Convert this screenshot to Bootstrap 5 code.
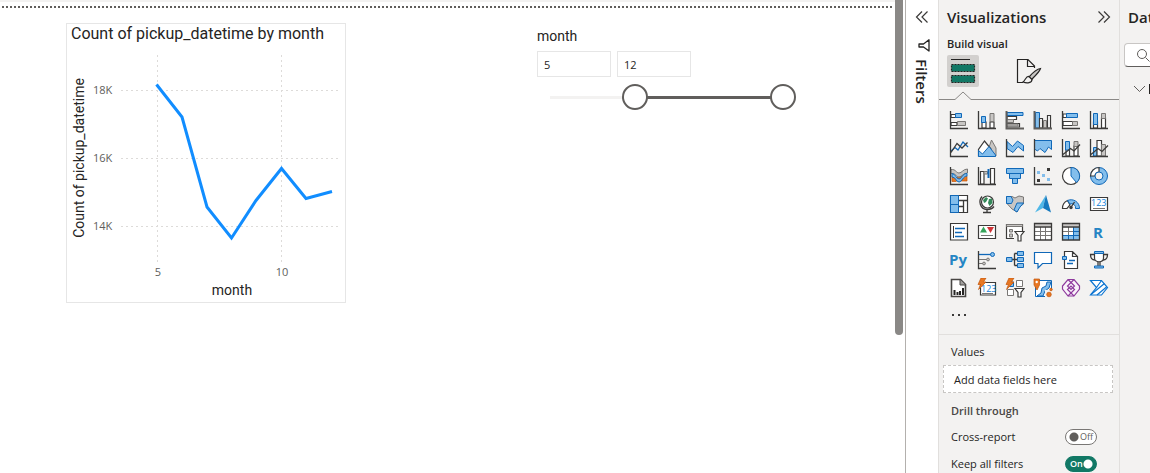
<!DOCTYPE html>
<html lang="en">
<head>
<meta charset="utf-8">
<meta name="viewport" content="width=device-width, initial-scale=1">
<title>Report editor</title>
<link rel="stylesheet" href="https://cdn.jsdelivr.net/npm/bootstrap@5.3.0/dist/css/bootstrap.min.css">
<style>
  body { font: 12px/16px "Open Sans", "Noto Sans", sans-serif; color: #252423; background: #fff; }
  button { border: 0; background: none; padding: 0; color: inherit; }
  svg { display: block; flex: none; }
  .report { border-top: 2px solid #f3f2f1; }
  .page-edge { height: 2px; margin: 4px 3px 0 2px; background: repeating-linear-gradient(90deg, #605e5c 0 2px, #fff 2px 4px); }
  .visuals { margin: 15px 0 0 66px; gap: 191px; }
  .din { font-family: Roboto, sans-serif; font-weight: 400; }
  .chart-box { width: 280px; border: 1px solid #e6e6e6; }
  .chart-title { font-size: 16px; line-height: 20px; padding: 0 0 1px 4px; white-space: nowrap; margin: 0; }
  .axis { font: 11px "Open Sans", sans-serif; fill: #605e5c; }
  .axis-title { font: 14px Roboto, sans-serif; fill: #252423; }
  .slicer { width: 259px; padding-top: 5px; }
  .slicer-title { font-size: 14px; line-height: 17px; }
  .slicer-inputs { gap: 6px; margin-top: 6px; }
  .slicer-box { width: 74px; height: 26px; border: 1px solid #e6e6e6; padding: 0 6px; font-size: 11px; color: #252423; }
  .slider { height: 26px; margin-top: 7px; }
  .track { left: 13px; right: 13px; top: 12px; height: 3px; background: #f3f2f1; }
  .track span { display: block; height: 3px; margin-left: auto; background: #605e5c; }
  .slider input { position: absolute; inset: 0; width: 100%; height: 26px; margin: 0; appearance: none; background: none; pointer-events: none; }
  .slider input::-webkit-slider-thumb { appearance: none; width: 26px; height: 26px; border: 2px solid #605e5c; border-radius: 50%; background: #fff; pointer-events: auto; }
  .scroll-rail { width: 10px; }
  .scroll-thumb { width: 8px; height: 335px; background: #8a8886; border-radius: 0 0 4px 4px; }
  .filters { width: 33px; border-left: 1px solid #b3b0ad; padding-top: 11px; }
  .filters-label { writing-mode: vertical-rl; font-size: 15px; line-height: 20px; font-weight: 600; margin-top: 7px; }
  .pane { background: #f3f2f1; }
  .viz { width: 182px; border: solid #e1dfdd; border-width: 0 1px; }
  .pane-title { font-size: 15px; line-height: 20px; font-weight: 600; margin: 0; }
  .pane-head { padding: 7px 8px 0; }
  .sub { font-weight: 600; font-size: 11px; line-height: 16px; margin: 9px 8px 3px; }
  .tab-button { width: 32px; height: 32px; border-radius: 2px; display: grid; place-items: center; }
  .tab-button.on { background: #d2d0ce; }
  .tab-line { border-bottom: 1px solid #8a8886; }
  .gallery { display: grid; grid-template-columns: repeat(6, 28px); grid-auto-rows: 28px; padding: 6px 6px 0; }
  .gallery button { display: grid; place-items: center; }
  .wells { border-top: 1px solid #e1dfdd; font-size: 11px; padding-top: 9px; }
  .well-title { padding: 0 12px; }
  .drill { color: #484644; font-weight: 600; margin-bottom: 4px; }
  .drop { margin: 5px 6px 10px 4px; height: 28px; padding: 6px 10px; border: 1px dashed #c8c6c4; background: #fff; }
  .option-line { padding: 0 22px 0 12px; height: 27px; }
  .switch { width: 32px; height: 16px; font-size: 9px; line-height: 16px; }
  .switch input { appearance: none; display: block; width: 32px; height: 16px; margin: 0; border: 1px solid #797775; border-radius: 8px; background: radial-gradient(circle at 8px 7px, #605e5c 0 4px, #fff 5px); }
  .switch input:checked { border-color: #117865; background: radial-gradient(circle at 22px 7px, #fff 0 4px, #117865 5px); }
  .switch span { position: absolute; top: 0; left: 15px; pointer-events: none; color: #605e5c; }
  .switch input:checked + span { left: 5px; color: #fff; font-weight: 600; }
  .data { width: 30px; padding-top: 7px; }
  .search { width: 180px; height: 24px; margin: 16px 0 0 4px; padding-left: 11px; background: #fff; border: 1px solid #c8c6c4; border-bottom-color: #605e5c; border-radius: 4px; }
  .search input { border: 0; width: 140px; background: none; }
  /* gallery icon inks */
  .k { fill: none; stroke: #3b3a39; stroke-width: 1.3; }
  .w { fill: #fff; stroke: #3b3a39; stroke-width: 1.2; }
  .g { fill: #c8c6c4; stroke: #797775; }
  .b { fill: #83beec; stroke: #1068b8; }
  .l { fill: none; stroke: #1068b8; stroke-width: 1.3; }
  .o { fill: #e87722; stroke: #c2560c; stroke-width: .7; }
  .glyph { font: 700 15px "Open Sans", sans-serif; fill: #2585c4; }
  .digits { font: 9px "Open Sans", sans-serif; fill: #1080d8; }
</style>
</head>
<body>
<div class="d-flex vh-100 overflow-hidden">
  <main class="report flex-grow-1 overflow-hidden">
    <div class="page-edge"></div>
    <div class="visuals d-flex align-items-start">
      <section class="chart-box flex-shrink-0">
        <h1 class="chart-title din">Count of pickup_datetime by month</h1>
        <svg width="278" height="257" viewBox="0 0 278 257">
          <g stroke="#dddbd9" stroke-dasharray="2 3"><path d="M54 45.500H272M54 113.500H272M54 181.500H272M90.500 10V217M214.500 10V217"/></g>
          <g class="axis"><text x="26" y="49">18K</text><text x="26" y="117">16K</text><text x="26" y="185">14K</text><text x="91" y="231" text-anchor="middle">5</text><text x="215" y="231" text-anchor="middle">10</text></g>
          <g class="axis-title"><text x="165" y="250" text-anchor="middle">month</text><text transform="translate(17 113) rotate(-90)" text-anchor="middle">Count of pickup_datetime</text></g>
          <path d="M89.500 39.500 115 72 140 162 164.500 193 189 155.500 214.500 123.500 239 153.500 265 146.500" fill="none" stroke="#118dff" stroke-width="3"/>
        </svg>
      </section>
      <section class="slicer flex-shrink-0">
        <div class="slicer-title din">month</div>
        <div class="slicer-inputs d-flex">
          <input class="slicer-box" type="text" value="5" aria-label="Month from">
          <input class="slicer-box" type="text" value="12" aria-label="Month to">
        </div>
        <div class="slider position-relative">
          <div class="track position-absolute"><span style="width:63.600%"></span></div>
          <input type="range" min="1" max="12" value="5" aria-label="First month">
          <input type="range" min="1" max="12" value="12" aria-label="Last month">
        </div>
      </section>
    </div>
  </main>
  <div class="scroll-rail flex-shrink-0"><div class="scroll-thumb"></div></div>
  <aside class="filters flex-shrink-0 d-flex flex-column align-items-center">
    <button aria-label="Expand filters"><svg width="14" height="12" viewBox="0 0 14 12" fill="none" stroke="#3b3a39" stroke-width="1.200"><path d="M7 .5 1.500 6 7 11.500M12.500 .5 7 6l5.500 5.500"/></svg></button>
    <svg class="mt-3 ms-1" width="14" height="13" viewBox="0 0 14 13" fill="none" stroke="#252423" stroke-width="1.300"><path d="M12 .8V12L6.500 8H2V5H6.500Z" stroke-linejoin="round"/></svg>
    <div class="filters-label">Filters</div>
  </aside>
  <aside class="pane viz flex-shrink-0">
    <div class="pane-head d-flex justify-content-between align-items-center">
      <h2 class="pane-title">Visualizations</h2>
      <button aria-label="Collapse"><svg width="14" height="12" viewBox="0 0 14 12" fill="none" stroke="#3b3a39" stroke-width="1.200"><path d="M1.500 .5 7 6 1.500 11.500M7 .5 12.500 6 7 11.500"/></svg></button>
    </div>
    <div class="sub">Build visual</div>
    <div class="d-flex px-2" style="gap:34px">
      <button class="tab-button on" aria-label="Build visual"><svg width="26" height="26" viewBox="0 0 26 26"><path d="M1 1.500H20" stroke="#252423"/><g fill="#117865" stroke="#252423" stroke-width="1.200" stroke-dasharray="2 1"><path d="M1.500 6.500H24.500V13.500H1.500ZM1.500 17.500H24.500V24.500H1.500Z"/></g></svg></button>
      <button class="tab-button" aria-label="Format visual"><svg width="26" height="26" viewBox="0 0 26 26" fill="none" stroke="#252423" stroke-width="1.200"><path d="M7 24.500H1.500V1.500H12L18.500 8V10M11.500 1.500V8.500H18.500"/><path d="M24.500 10.500C21 11 16 15.500 13 19L15.500 21.500C19 18 23.500 14 24.500 10.500Z" fill="#c8c6c4"/><path d="M13 18.500C10 18 9.500 22 7 24 11 25.500 16 25 16 21.500Z" fill="#f3f2f1"/></svg></button>
    </div>
    <div class="d-flex align-items-end mt-1">
      <div class="tab-line" style="width:16px"></div>
      <svg width="16" height="9" viewBox="0 0 16 9" fill="none" stroke="#8a8886"><path d="M0 8.500 8 1 16 8.500"/></svg>
      <div class="tab-line flex-grow-1"></div>
    </div>
    <div class="gallery">
      <button aria-label="Stacked bar chart"><svg width="20" height="20"><path class="w" d="M2 4.500H8V7.500H2ZM2 12.500H8V15.500H2Z"/><path class="b" d="M6.500 3.500H12.500V7.500H6.500Z"/><path class="g" d="M8.500 11.500H16.500V15.500H8.500Z"/><path class="k" d="M1.500 1V18.500H19"/></svg></button>
      <button aria-label="Stacked column chart"><svg width="20" height="20"><path class="w" d="M5 12H9V18H5ZM13 12H17V18H13Z"/><path class="b" d="M4.500 6.500H8.500V12.500H4.500Z"/><path class="g" d="M13 3.500H17V11.500H13Z"/><path class="k" d="M1.500 1V18.500H19"/></svg></button>
      <button aria-label="Clustered bar chart"><svg width="20" height="20"><path class="b" d="M2 2.500H18V5.500H2Z"/><path class="w" d="M2 6.500H11.500V9.500H2ZM2 13.500H14.500V17H2Z"/><path class="g" d="M2 9.500H8.500V12.500H2ZM2 14H13V16H2Z"/><path d="M1.500 1V18.500H19" fill="none" stroke="#605e5c" stroke-width="2"/></svg></button>
      <button aria-label="Clustered column chart"><svg width="20" height="20"><path class="b" d="M2.500 2.500H6.500V18H2.500Z"/><path class="w" d="M6.500 8.500H9.500V18H6.500ZM14.500 5.500H17.500V18H14.500Z"/><path class="g" d="M10.500 10.500H13.500V18H10.500Z"/><path d="M1.500 1V18.500H19" fill="none" stroke="#605e5c" stroke-width="2"/></svg></button>
      <button aria-label="100% stacked bar chart"><svg width="20" height="20"><path class="w" d="M2 4H6V7.500H2ZM2 11.500H12V15.500H2Z"/><path class="b" d="M5.500 3.500H16.500V7.500H5.500Z"/><path class="g" d="M11.500 11.500H16.500V15.500H11.500Z"/><path class="k" d="M1.500 1V18.500H19"/></svg></button>
      <button aria-label="100% stacked column chart"><svg width="20" height="20"><path class="w" d="M4.500 12H8.500V18H4.500ZM12.500 8H16.500V18H12.500Z"/><path class="b" d="M4.500 3.500H8.500V14.500H4.500Z"/><path class="g" d="M12.500 3.500H16.500V8.500H12.500Z"/><path class="k" d="M1.500 1V18.500H19"/></svg></button>

      <button aria-label="Line chart"><svg width="20" height="20"><path class="l" d="M2 13 6 9.500 9 12 14 4 19 9"/><path class="k" d="M2 14.500 8 5.500 13 10 18.500 4.500M1.500 1V18.500H19"/></svg></button>
      <button aria-label="Area chart"><svg width="20" height="20"><path class="g" d="M9 18 14.500 2 19 10V18Z"/><path class="w" d="M1.500 18V11.500L7.500 3 14 11V18Z"/><path class="b" d="M1.500 18.500V12.500L5.500 16 12 8.500 18.500 17V18.500Z"/></svg></button>
      <button aria-label="Stacked area chart"><svg width="20" height="20"><path class="b" d="M2 3.500 7.500 8.500 12.500 3 18.500 7.500V13L13 8.500 8 14.500 2 10.500Z"/><path class="k" d="M1.500 1V18.500H19"/></svg></button>
      <button aria-label="100% stacked area chart"><svg width="20" height="20"><path class="b" d="M1.500 2.500H18.500V11.500L15.500 9 12 14.500 7 10.500 4.500 13 1.500 11Z"/><path class="k" d="M1.500 1V18.500H19"/></svg></button>
      <button aria-label="Line and stacked column chart"><svg width="20" height="20"><path class="w" d="M5 9H8.500V18H5ZM13 8H17V18H13Z"/><path class="b" d="M4.500 3.500H8.500V12H4.500Z"/><path class="g" d="M13 3.500H17V8.500H13Z"/><path class="k" d="M1.500 1V18.500H19M2 16.500 9.500 10.500 13 13 19 6.500"/></svg></button>
      <button aria-label="Line and clustered column chart"><svg width="20" height="20"><path class="b" d="M4.500 9.500H8V18H4.500Z"/><path class="w" d="M8 2.500H12.500V18H8Z"/><path class="g" d="M12.500 6.500H16.500V18H12.500Z"/><path class="k" d="M1.500 1V18.500H19M2 16.500 9 10.500 13 13.500 19 7.500"/></svg></button>

      <button aria-label="Ribbon chart"><svg width="20" height="20"><path class="o" d="M3 9.500 8 12 11 9 18 10V15H12L10 13 7 15.500H3Z"/><path class="g" d="M2 3.500C7 3 7 7 10 7S14 3 18.500 3V7C14 7 13 11 10 11S7 7 2 7.500Z"/><path class="b" d="M3 7.500C7 8 7 13 10 13S13 7.500 18 7.500V10C14 10 13 16 10 16S7 11 3 11Z"/><path class="k" d="M1.500 1V18.500H19"/></svg></button>
      <button aria-label="Waterfall chart"><svg width="20" height="20"><path class="w" d="M3.500 5.500H7V18H3.500ZM13.500 2.500H17.500V18H13.500Z"/><path class="g" d="M7 5.500H10.500V8H7Z"/><path d="M10.500 3H12.500V12H10.500Z" fill="#1068b8"/><path class="k" d="M1.500 1V18.500H19"/></svg></button>
      <button aria-label="Funnel"><svg width="20" height="20"><path class="b" d="M1.500 2.500H18.500V7.500H1.500ZM4.500 7.500H15.500V12.500H4.500ZM7.500 12.500H12.500V17.500H7.500Z"/></svg></button>
      <button aria-label="Scatter chart"><svg width="20" height="20"><path d="M4 13H7V16H4ZM14 2H17V5H14Z" fill="#3b3a39"/><path d="M4 5H7V8H4ZM9 8H12V11H9ZM14 12H17V15H14Z" fill="#83beec"/><path class="k" d="M1.500 1V18.500H19"/></svg></button>
      <button aria-label="Pie chart"><svg width="20" height="20"><circle class="w" cx="10" cy="10" r="8.500"/><path class="b" d="M10 1.500A8.500 8.500 0 0 1 15.500 16.500L10 10Z"/></svg></button>
      <button aria-label="Donut chart"><svg width="20" height="20"><circle class="b" cx="10" cy="10" r="8.500"/><path class="w" d="M10 1.500A8.500 8.500 0 0 0 1.500 10H6A4 4 0 0 1 10 6Z"/><circle cx="10" cy="10" r="4" fill="#f3f2f1" stroke="#1068b8"/></svg></button>

      <button aria-label="Treemap"><svg width="20" height="20"><path class="w" d="M1.500 1.500H18.500V18.500H1.500Z"/><path class="k" d="M10 6.500H18.500M14.500 6.500V18.500M10 12.500H14.500"/><path class="b" d="M1.500 1.500H9.500V18.500H1.500ZM1.500 10.500H9.500"/></svg></button>
      <button aria-label="Map"><svg width="20" height="20"><circle class="w" cx="10.500" cy="8" r="6"/><path d="M6 6 9 3 11 4.500 9 8 7 9ZM12 5 15 4.500 15.500 9 12.500 12 11 9Z" fill="#35895a"/><path class="k" d="M5 2.500C1 7 3 15 10 15.500 13 15.500 15.500 14.500 17 12.500M10 15.500V18M6 18.500H14"/></svg></button>
      <button aria-label="Filled map"><svg width="20" height="20"><path class="g" d="M1.500 2.500H7L10 4 14 2 18.500 3V10L14 13 12 18 7 15 1.500 9Z"/><path class="b" d="M1.500 2.500H6L8 6 6.500 9.500H1.500ZM12 9H18.500L15 13 12 18 9 16Z"/></svg></button>
      <button aria-label="Azure map"><svg width="20" height="20"><path d="M13 1 2 18.500 10 14Z" fill="#50b8e8"/><path d="M13 1 18 18.500 10 14Z" fill="#167abf"/></svg></button>
      <button aria-label="Gauge"><svg width="20" height="20"><path class="w" d="M1.500 14.500A8.500 8.500 0 0 1 6.500 6.500L9 11 6 14.500Z"/><path class="b" d="M6.500 6.500A8.500 8.500 0 0 1 18.500 14.500H14.500A4 4 0 0 0 9 10Z"/><path class="k" d="M9.500 14 13.500 8"/><circle cx="10" cy="13.500" r="1.700" fill="#3b3a39"/></svg></button>
      <button aria-label="Card"><svg width="20" height="20"><path class="w" d="M1.500 3.500H18.500V16.500H1.500Z"/><text class="digits" x="2" y="12">123</text><path d="M4 14.500H16" stroke="#797775"/></svg></button>

      <button aria-label="Multi-row card"><svg width="20" height="20"><path class="w" d="M1.500 1.500H18.500V18H1.500Z"/><path d="M4.500 4V16" stroke="#3b3a39"/><path d="M6 6.500H16M6 10.500H13M6 14.500H15" stroke="#1068b8" stroke-width="1.500"/></svg></button>
      <button aria-label="KPI"><svg width="20" height="20"><path class="w" d="M1.500 3.500H18.500V16.500H1.500Z"/><path d="M3 10.500 6.500 4.500 10 10.500Z" fill="#35a35a"/><path d="M10 5H17L13.500 11Z" fill="#d13438"/><path d="M4 13.500H16" stroke="#797775"/></svg></button>
      <button aria-label="Slicer"><svg width="20" height="20"><path class="w" d="M1.500 2.500H17.500V16.500H1.500Z"/><path class="g" d="M1.500 2.500H17.500V4.500H1.500ZM4.500 7.500H7.500V10H4.500ZM4.500 12H7.500V15H4.500Z"/><path d="M9 9H20V20H9Z" fill="#f3f2f1"/><path class="w" d="M10 9.500H19L16 13.500V19H13V13.500Z"/></svg></button>
      <button aria-label="Table"><svg width="20" height="20"><path d="M1.500 1.500H18.500V18H1.500Z" fill="#fff"/><path d="M2 2H18V4.500H2Z" fill="#c8c6c4"/><path d="M2 9.500H18M2 13.500H18M7.500 5V18M12.500 5V18" stroke="#797775"/><path class="k" d="M1.500 1.500H18.500V18H1.500ZM2 5H18"/></svg></button>
      <button aria-label="Matrix"><svg width="20" height="20"><path d="M1.500 1.500H18.500V18H1.500Z" fill="#fff"/><path d="M2 2H18V4.500H2Z" fill="#c8c6c4"/><path d="M12.500 5H18V18H2V13.500H12.500Z" fill="#83beec"/><path d="M2 9.500H12M7.500 5V13" stroke="#797775"/><path d="M12.500 5V18M2 13.500H18M12.500 9.500H18M7.500 13.500V18" stroke="#1068b8"/><path class="k" d="M1.500 1.500H18.500V18H1.500ZM2 5H18"/></svg></button>
      <button aria-label="R script visual"><svg width="20" height="20"><text class="glyph" x="4" y="16">R</text></svg></button>

      <button aria-label="Python visual"><svg width="20" height="20"><text class="glyph" x="0" y="15">Py</text></svg></button>
      <button aria-label="Key influencers"><svg width="20" height="20"><path class="k" d="M1.500 1V18.500H19"/><path class="l" d="M2 4.500H14"/><circle class="b" cx="15.500" cy="4.500" r="2"/><path d="M2 9.500H10M2 13.500H6" stroke="#797775"/><circle class="g" cx="11" cy="9.500" r="1.400"/><circle class="g" cx="7" cy="13.500" r="1.400"/></svg></button>
      <button aria-label="Decomposition tree"><svg width="20" height="20"><path class="k" d="M7 9.500H13M9.500 3.500V15.500M9.500 3.500H13M9.500 15.500H13"/><path class="b" d="M1.500 7.500H7V11.500H1.500ZM12.500 1.500H18.500V5.500H12.500ZM12.500 7.500H18.500V11.500H12.500ZM12.500 13.500H18.500V17.500H12.500Z"/></svg></button>
      <button aria-label="Q&amp;A"><svg width="20" height="20"><path d="M1.500 2.500H18.500V13.500H9.500L5 18V13.500H1.500Z" fill="#fff" stroke="#1068b8" stroke-width="1.200"/></svg></button>
      <button aria-label="Narrative"><svg width="20" height="20"><path class="w" d="M3.500 1.500H11.500L16.500 6.500V18.500H3.500ZM11.500 1.500V6.500H16.500"/><path class="b" d="M1.500 6.500H5.500V9.500H1.500Z"/><path class="l" d="M8 10.500H14M6 13.500H12"/></svg></button>
      <button aria-label="Metrics"><svg width="20" height="20"><path class="w" d="M5.500 3H14.500V8C14.500 13 5.500 13 5.500 8Z"/><path class="k" d="M5.500 4.500H1.500C1.500 8 3 10 6 10M14.500 4.500H18.500C18.500 8 17 10 14 10M9 12V16M11 12V16"/><path class="b" d="M5.500 1.500H14.500V3.500H5.500ZM5.500 16H14.500V18H5.500Z"/></svg></button>

      <button aria-label="Paginated report"><svg width="20" height="20"><path d="M2.500 1.500H11.500L16.500 6.500V18.500H2.500Z" fill="#fff" stroke="#484644" stroke-width="1.600"/><path d="M11 1.500V7H16.500" fill="#a19f9d" stroke="#484644"/><path d="M4.500 12H6.500V17H4.500ZM7.500 14H9.500V17H7.500ZM10 13H12V17H10ZM13 10H15V17H13Z" fill="#252423"/></svg></button>
      <button aria-label="New card"><svg width="20" height="20"><path class="w" d="M3.500 4.500H18.500V17H3.500Z"/><text class="digits" x="4" y="14">123</text><path d="M5 15.500H16" stroke="#797775"/><path class="o" d="M4 0H9L6.500 4H9L1.500 11.500 3.500 6.500H1Z"/></svg></button>
      <button aria-label="New slicer"><svg width="20" height="20"><path d="M11.500 2.500H17.500V8.500H11.500ZM2.500 11.500H8.500V17.500H2.500Z" fill="#fff" stroke="#797775"/><path class="b" d="M4.500 4H8.500V8.500H4.500Z"/><path class="w" d="M10 10.500H19L16 14.500V19H13V14.500Z"/><path class="o" d="M4 0H9L6.500 4H9L1.500 11.500 3.500 6.500H1Z"/></svg></button>
      <button aria-label="ArcGIS map"><svg width="20" height="20"><path d="M2.500 2.500H18.500V18.500H2.500Z" fill="#fff" stroke="#1068b8"/><path class="b" d="M18 4H14L13 8 9 10 8 15 4 18H10L12 13 16 10Z"/><path class="o" d="M1 1H6.500V7L4 12 1 7Z"/><circle cx="3.700" cy="4" r="1.200" fill="#fff"/><path d="M12 12H20V20H12Z" fill="#f3f2f1"/><circle class="o" cx="16" cy="16.500" r="2.300"/><circle class="o" cx="18" cy="11.500" r="1.300"/></svg></button>
      <button aria-label="Power Apps"><svg width="20" height="20" fill="#f9f2fa" stroke="#8e3a9d" stroke-width="1.200"><path d="M7 1.500H13L18.500 8V11L13 18H7L1.500 11V8Z"/><path d="M7 1.500 13.500 8 10 11.500 6.500 8 13 1.500M7 18 13.500 11.500 10 8 6.500 11.500 13 18" fill="none"/></svg></button>
      <button aria-label="Power Automate"><svg width="20" height="20" fill="#fff" stroke="#0b74d1" stroke-width="1.200"><path d="M1.500 2.500H12.500L18.500 9.500 12.500 17H1.500L7.500 9.500Z"/><path d="M7.500 9.500 12.500 2.500M2 16.500 15.500 5.500M8 17 17.500 9" fill="none"/></svg></button>

      <button aria-label="More visuals"><svg width="20" height="20" fill="#3b3a39"><path d="M3 8H5V10H3ZM9 8H11V10H9ZM15 8H17V10H15Z"/></svg></button>
    </div>
    <div class="wells mt-1">
      <div class="well-title">Values</div>
      <div class="drop">Add data fields here</div>
      <div class="well-title drill">Drill through</div>
      <div class="option-line d-flex justify-content-between align-items-center"><label for="cross">Cross-report</label><div class="switch position-relative"><input id="cross" type="checkbox" role="switch"><span>Off</span></div></div>
      <div class="option-line d-flex justify-content-between align-items-center"><label for="keep">Keep all filters</label><div class="switch position-relative"><input id="keep" type="checkbox" role="switch" checked><span>On</span></div></div>
    </div>
  </aside>
  <aside class="pane data flex-shrink-0 overflow-hidden">
    <h2 class="pane-title ms-2">Data</h2>
    <div class="search d-flex align-items-center"><svg width="14" height="14" viewBox="0 0 14 14" fill="none" stroke="#605e5c"><circle cx="6" cy="6" r="4.500"/><path d="M9.500 9.500 13.500 13.500"/></svg><input type="search" aria-label="Search fields"></div>
    <div class="d-flex align-items-center mt-3" style="width:60px;padding-left:13px;gap:3px">
      <svg width="13" height="12" viewBox="0 0 13 12" fill="none" stroke="#605e5c"><path d="M1 3 6.500 8.500 12 3"/></svg>
      <svg width="12" height="12" viewBox="0 0 12 12"><path d="M0 1H12V11H0Z" fill="#252423"/></svg>
    </div>
  </aside>
</div>
<script src="https://cdn.jsdelivr.net/npm/bootstrap@5.3.0/dist/js/bootstrap.bundle.min.js"></script>
</body>
</html>
